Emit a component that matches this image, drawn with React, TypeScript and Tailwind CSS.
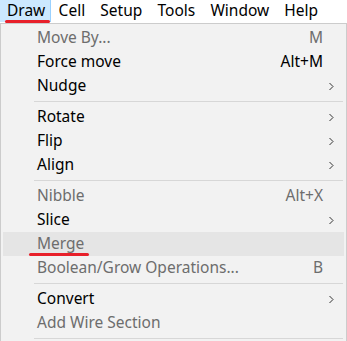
import React from "react";

type Item = {
  label: string;
  shortcut?: string;
  sub?: boolean;
  disabled?: boolean;
  hover?: boolean;
  mark?: boolean;
};

const groups: Item[][] = [
  [
    { label: "Move By...", shortcut: "M", disabled: true },
    { label: "Force move", shortcut: "Alt+M" },
    { label: "Nudge", sub: true },
  ],
  [
    { label: "Rotate", sub: true },
    { label: "Flip", sub: true },
    { label: "Align", sub: true },
  ],
  [
    { label: "Nibble", shortcut: "Alt+X", disabled: true },
    { label: "Slice", sub: true },
    { label: "Merge", disabled: true, hover: true, mark: true },
    { label: "Boolean/Grow Operations...", shortcut: "B", disabled: true },
  ],
  [
    { label: "Convert", sub: true },
    { label: "Add Wire Section", disabled: true },
  ],
];

const Chevron = () => (
  <svg width="5" height="9" viewBox="0 0 5 9" className="text-[#333]">
    <path d="M0.5 1 L4 4.5 L0.5 8" fill="none" stroke="currentColor" strokeWidth="1" />
  </svg>
);

const MenuRow = ({ item }: { item: Item }) => (
  <div
    className={
      "relative flex h-[24px] items-center mx-[2px] " +
      (item.hover ? "bg-[#e5e5e5]" : "")
    }
  >
    <span
      className={
        "pl-[34px] flex-1 " + (item.disabled ? "text-[#6d6d6d]" : "text-black")
      }
    >
      {item.label}
    </span>
    {item.shortcut && (
      <span
        className={
          "pr-[21px] " + (item.disabled ? "text-[#6d6d6d]" : "text-black")
        }
      >
        {item.shortcut}
      </span>
    )}
    {item.sub && (
      <span className="pr-[10px] flex items-center">
        <Chevron />
      </span>
    )}
    {item.mark && (
      <div className="absolute left-[26px] top-[21px] h-[3px] w-[60px] rounded-full bg-[#e8202a]" />
    )}
  </div>
);

export default function App() {
  const menus = ["Draw", "Cell", "Setup", "Tools", "Window", "Help"];
  return (
    <div
      className="w-[347px] h-[341px] overflow-hidden bg-white text-[15.5px] leading-none"
      style={{ fontFamily: '"Noto Sans", "Open Sans", sans-serif' }}
    >
      <div className="flex h-[22px] items-center">
        {menus.map((m, i) => (
          <div
            key={m}
            className={
              "relative flex h-[22px] items-center " +
              (i === 0
                ? "px-[7px] bg-[#cce8ff] border-r border-[#99d1ff] w-[51px]"
                : "px-[7.6px]")
            }
          >
            {m}
            {i === 0 && (
              <div className="absolute left-[5px] top-[20px] h-[3px] w-[45px] rounded-full bg-[#e8202a]" />
            )}
          </div>
        ))}
      </div>
      <div className="mt-[1px] w-[347px] border border-[#cccccc] bg-[#f2f2f2] pt-[2px]">
        {groups.map((g, gi) => (
          <div key={gi}>
            {gi > 0 && <div className="ml-[33px] mr-[3px] my-[3px] h-px bg-[#d7d7d7]" />}
            {g.map((it) => (
              <MenuRow key={it.label} item={it} />
            ))}
          </div>
        ))}
        <div className="ml-[33px] mr-[3px] my-[3px] h-px bg-[#d7d7d7]" />
      </div>
    </div>
  );
}
